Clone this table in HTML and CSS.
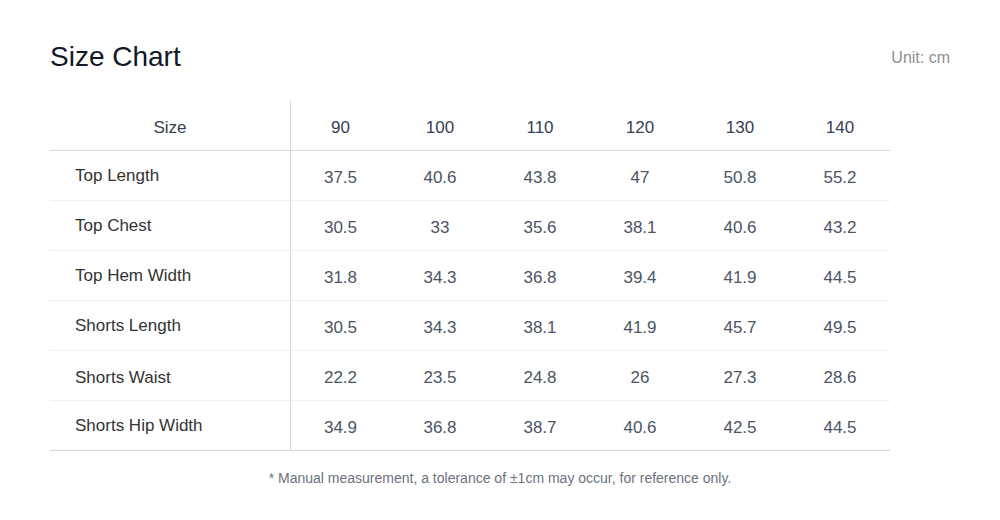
FILE: index.html
```html
<!DOCTYPE html>
<html lang="en">
<head>
<meta charset="utf-8">
<title>Size Chart</title>
<link rel="stylesheet" href="styles.css">
</head>
<body>
<div class="page">
  <header class="top">
    <h1 class="title">Size Chart</h1>
    <span class="unit">Unit: cm</span>
  </header>
  <div class="chart">
    <div class="cell head label-col">Size</div>
    <div class="cell head first">90</div>
    <div class="cell head">100</div>
    <div class="cell head">110</div>
    <div class="cell head">120</div>
    <div class="cell head">130</div>
    <div class="cell head">140</div>

    <div class="cell name label-col">Top Length</div>
    <div class="cell val first">37.5</div><div class="cell val">40.6</div><div class="cell val">43.8</div><div class="cell val">47</div><div class="cell val">50.8</div><div class="cell val">55.2</div>

    <div class="cell name label-col">Top Chest</div>
    <div class="cell val first">30.5</div><div class="cell val">33</div><div class="cell val">35.6</div><div class="cell val">38.1</div><div class="cell val">40.6</div><div class="cell val">43.2</div>

    <div class="cell name label-col">Top Hem Width</div>
    <div class="cell val first">31.8</div><div class="cell val">34.3</div><div class="cell val">36.8</div><div class="cell val">39.4</div><div class="cell val">41.9</div><div class="cell val">44.5</div>

    <div class="cell name label-col">Shorts Length</div>
    <div class="cell val first">30.5</div><div class="cell val">34.3</div><div class="cell val">38.1</div><div class="cell val">41.9</div><div class="cell val">45.7</div><div class="cell val">49.5</div>

    <div class="cell name name-low label-col">Shorts Waist</div>
    <div class="cell val first">22.2</div><div class="cell val">23.5</div><div class="cell val">24.8</div><div class="cell val">26</div><div class="cell val">27.3</div><div class="cell val">28.6</div>

    <div class="cell name label-col last">Shorts Hip Width</div>
    <div class="cell val first last">34.9</div><div class="cell val last">36.8</div><div class="cell val last">38.7</div><div class="cell val last">40.6</div><div class="cell val last">42.5</div><div class="cell val last">44.5</div>
  </div>
  <p class="note">* Manual measurement, a tolerance of ±1cm may occur, for reference only.</p>
</div>
</body>
</html>
```

FILE: styles.css
```css
html, body {
  margin: 0;
  padding: 0;
  background: #ffffff;
}

body {
  font-family: "Liberation Sans", Arial, sans-serif;
}

.page {
  padding: 40px 50px 0 50px;
}

.top {
  display: flex;
  justify-content: space-between;
  align-items: center;
  height: 32px;
}

.title {
  margin: 0;
  padding-top: 1px;
  font-size: 28px;
  line-height: 32px;
  font-weight: 400;
  color: #111827;
}

.unit {
  font-size: 16px;
  color: #8f8f8f;
  margin-top: 3px;
}

.chart {
  margin-top: 29px;
  width: 840px;
  display: grid;
  grid-template-columns: 240px repeat(6, 100px);
}

.cell {
  box-sizing: border-box;
  height: 50px;
  display: flex;
  align-items: center;
  justify-content: center;
  font-size: 17px;
  border-bottom: 1px solid #f0f0f2;
}

.first {
  border-left: 1px solid #d5d7de;
}

.head {
  color: #374151;
  padding-top: 4px;
  border-bottom-color: #d5d7de;
}

.name {
  justify-content: flex-start;
  padding-left: 25px;
  color: #333333;
}

.name-low {
  padding-top: 4px;
}

.val {
  color: #4b5563;
  padding-top: 4px;
}

.last {
  border-bottom-color: #d5d7de;
}

.note {
  margin: 19px 0 0 0;
  text-align: center;
  font-size: 14px;
  line-height: 16px;
  color: #6b7280;
  margin-left: -50px;
  margin-right: -50px;
}
```
